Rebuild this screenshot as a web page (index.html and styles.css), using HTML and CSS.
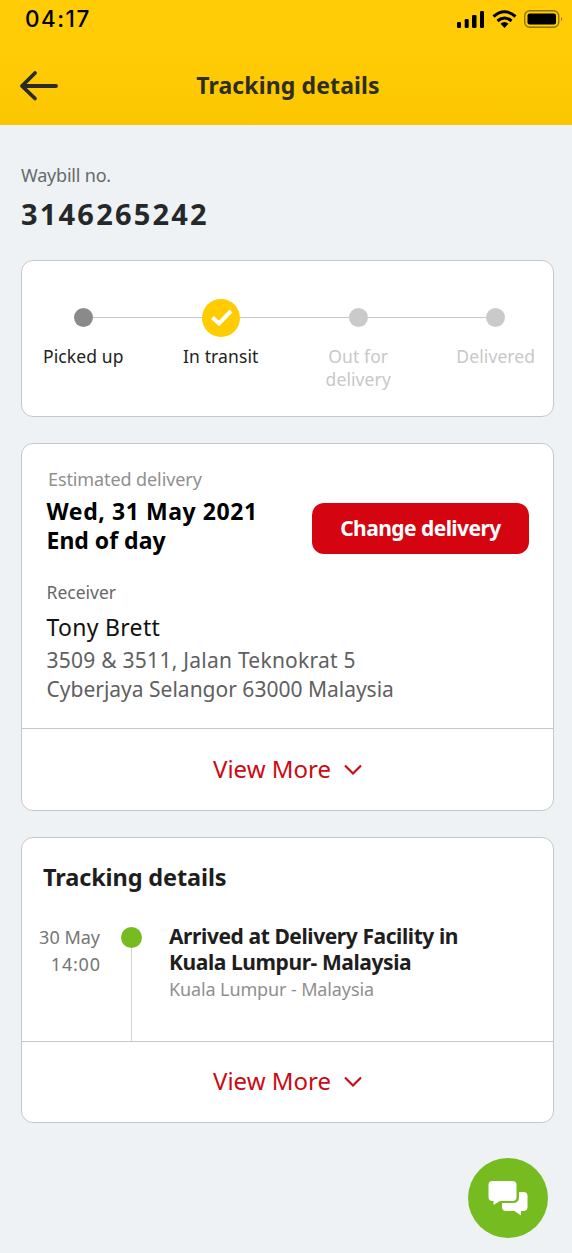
FILE: index.html
```html
<!DOCTYPE html>
<html lang="en">
<head>
<meta charset="utf-8">
<title>Tracking details</title>
<link rel="stylesheet" href="styles.css">
</head>
<body>
<header class="header">
  <div class="status">
    <span class="time">04:17</span>
    <svg class="status-icons" width="108" height="20" viewBox="0 0 108 20">
      <rect x="1" y="13" width="4" height="6" rx="1.2"/>
      <rect x="8.700" y="10" width="4" height="9" rx="1.2"/>
      <rect x="16" y="6" width="4.500" height="13" rx="1.2"/>
      <rect x="24" y="2" width="4" height="17" rx="1.2"/>
      <g fill="none" stroke="#000" stroke-width="3">
        <path d="M37.500 7.500Q48.500-2 59.500 7.500"/>
        <path d="M41.500 12Q48.500 6 55.500 12"/>
      </g>
      <path d="M44.500 14.700Q48.500 11.500 52.500 14.700L48.500 19Z"/>
      <rect x="68.700" y="1.700" width="34" height="16.500" rx="5" fill="none" stroke="#8d7300" stroke-width="1.400"/>
      <rect x="71.500" y="4.500" width="28.500" height="11" rx="2"/>
      <path d="M105 8Q107.500 10 105 12Z" fill="#8d7300"/>
    </svg>
  </div>
  <div class="titlebar">
    <svg class="back" width="40" height="32" viewBox="0 0 40 32" fill="none" stroke="#2a2a26" stroke-width="3.800" stroke-linecap="round" stroke-linejoin="round"><path d="M37 16H3M16 3L3 16L16 28.500"/></svg>
    <h1 class="title">Tracking details</h1>
  </div>
</header>
<main class="main">
  <section class="waybill">
    <div class="waybill-label">Waybill no.</div>
    <div class="waybill-number">3146265242</div>
  </section>
  <section class="card progress">
    <ol class="steps">
      <li class="step done"><div class="marker"><i class="dot"></i></div><span>Picked up</span></li>
      <li class="step current"><div class="marker"><svg width="38" height="38" viewBox="0 0 38 38"><circle cx="19" cy="19" r="19" fill="#fc0"/><path d="M10.500 18.500L17 24.500L29 12" fill="none" stroke="#fff" stroke-width="4"/></svg></div><span>In transit</span></li>
      <li class="step"><div class="marker"><i class="dot"></i></div><span>Out for<br>delivery</span></li>
      <li class="step"><div class="marker"><i class="dot"></i></div><span>Delivered</span></li>
    </ol>
  </section>
  <section class="card delivery">
    <div class="delivery-body">
      <div class="eta-label">Estimated delivery</div>
      <div class="eta-row">
        <div class="eta"><div class="eta-date">Wed, 31 May 2021</div><div class="eta-time">End of day</div></div>
        <button class="change">Change delivery</button>
      </div>
      <div class="receiver-label">Receiver</div>
      <div class="receiver">Tony Brett</div>
      <div class="address"><div class="address-street">3509 &amp; 3511, Jalan Teknokrat 5</div><div>Cyberjaya Selangor 63000 Malaysia</div></div>
    </div>
    <div class="more"><span>View More</span><svg width="18" height="12" viewBox="0 0 18 12" fill="none" stroke="#cc0a14" stroke-width="2.200"><path d="M1 1.500L9 9.500L17 1.500"/></svg></div>
  </section>
  <section class="card history">
    <div class="history-body">
      <h2 class="history-title">Tracking details</h2>
      <div class="event">
        <div class="when"><div>30 May</div><div class="hour">14:00</div></div>
        <div class="rail"><i class="event-dot"></i></div>
        <div class="what"><div>Arrived at Delivery Facility in</div><div>Kuala Lumpur- Malaysia</div><div class="where">Kuala Lumpur - Malaysia</div></div>
      </div>
    </div>
    <div class="more"><span>View More</span><svg width="18" height="12" viewBox="0 0 18 12" fill="none" stroke="#cc0a14" stroke-width="2.200"><path d="M1 1.500L9 9.500L17 1.500"/></svg></div>
  </section>
</main>
<button class="chat" aria-label="Chat">
  <svg width="80" height="80" viewBox="0 0 80 80" fill="#fff"><path d="M24.500 23H44.500Q48.500 23 48.500 27V39Q48.500 43 44.500 43H32L25.500 47V43H24.500Q20.500 43 20.500 39V27Q20.500 23 24.500 23Z"/><path d="M51 34H55.500Q59.500 34 59.500 38V49Q59.500 53 55.500 53H53V57.500L46.500 53H38Q34 53 34 49V45H45Q51 45 51 39Z"/></svg>
</button>
</body>
</html>
```
FILE: styles.css
```css
* { box-sizing: border-box; }
body { margin: 0; width: 572px; height: 1253px; overflow: hidden; background: #eef2f4; font-family: "Noto Sans", sans-serif; color: #1e1e1e; white-space: nowrap; }
h1, h2, ol { margin: 0; padding: 0; }
.header { height: 125px; background: linear-gradient(#ffcc05 40%, #fbc600); }
.status { display: flex; justify-content: space-between; align-items: center; height: 37px; padding: 0 8px 0 25px; }
.time { padding-top: 1px; font: 500 22.5px/36px Inter, sans-serif; letter-spacing: 1.5px; color: #000; }
.status-icons { display: block; }
.titlebar { display: grid; grid-template-columns: 60px 1fr 60px; align-items: center; height: 97px; padding: 0 15px 0 19px; }
.back { display: block; }
.title { padding-bottom: 2px; font-size: 23px; line-height: 30px; letter-spacing: 0.12px; text-align: center; color: #2d2d22; }
.main { display: flex; flex-direction: column; padding: 38px 18px 0 21px; }
.waybill { height: 97px; }
.waybill-label { font-size: 18px; line-height: 24px; letter-spacing: -0.2px; color: #666a6c; }
.waybill-number { margin-top: 9px; font-size: 29px; font-weight: 700; line-height: 36px; letter-spacing: 2.2px; color: #25282a; }
.card { background: #fff; border: 1px solid #c5c8ca; border-radius: 12px; }
.progress { height: 157px; margin-bottom: 26px; padding-top: 38px; }
.steps { display: grid; grid-template-columns: repeat(4, 137.5px); margin: 0 -7.5px; list-style: none; }
.step { text-align: center; font-size: 17.5px; line-height: 22.5px; letter-spacing: 0.1px; color: #c8c8c8; }
.marker { display: flex; justify-content: center; align-items: center; height: 38px; margin-bottom: 8px; }
.marker::before, .marker::after { content: ""; flex: 1; height: 1px; margin-bottom: 1px; background: #c8c8c8; }
.step:first-child .marker::before, .step:last-child .marker::after { background: none; }
.dot { width: 19px; height: 19px; margin-bottom: 2px; border-radius: 50%; background: #cacaca; }
.done, .current { color: #222; }
.done .dot { background: #8a8a8a; }
.delivery { height: 368px; margin-bottom: 26px; }
.delivery-body { height: 284px; padding: 23px 24px 0 24.5px; }
.eta-label { margin-left: 1.5px; font-size: 18px; line-height: 24px; letter-spacing: -0.1px; color: #8f8f8f; }
.eta-row { display: flex; justify-content: space-between; height: 78px; padding-top: 5px; }
.eta { padding-top: 1px; font-size: 23px; font-weight: 700; line-height: 28.5px; color: #000; }
.eta-date { letter-spacing: 0.57px; }
.eta-time { letter-spacing: 0; }
.change { width: 217px; height: 51px; margin-top: 7px; padding: 0 0 2px; border: 0; border-radius: 12px; background: #d40511; color: #fff; font: 700 21px/28px "Noto Sans", sans-serif; letter-spacing: -0.55px; }
.receiver-label { margin-top: 11px; font-size: 17.5px; line-height: 24px; color: #686868; }
.receiver { margin-top: 8px; font-size: 23px; line-height: 30px; letter-spacing: 0.3px; color: #111; }
.address { margin-top: 4px; font-size: 21px; line-height: 29px; color: #606060; }
.address-street { letter-spacing: 0.25px; }
.more { display: flex; justify-content: center; align-items: center; gap: 13px; height: 82px; border-top: 1px solid #c5c8ca; font-size: 24px; color: #cc0a14; }
.more span { padding-bottom: 3px; }
.history { height: 286px; }
.history .more { height: 80px; }
.history-body { display: flex; flex-direction: column; height: 203px; padding: 24px 21px 0 17px; }
.history-title { margin-left: 4px; font-size: 23.5px; line-height: 30px; letter-spacing: -0.12px; }
.event { display: grid; grid-template-columns: 61px 62px 1fr; flex: 1; margin-top: 32px; }
.when { text-align: right; font-size: 18px; line-height: 27px; color: #757575; }
.hour { margin-right: -0.8px; letter-spacing: 0.8px; }
.rail { display: flex; flex-direction: column; align-items: center; padding-top: 3px; }
.rail::after { content: ""; flex: 1; width: 1px; background: #d4d4d4; }
.event-dot { width: 21px; height: 21px; border-radius: 50%; background: #76bc21; }
.what { padding-left: 7px; font-size: 21px; font-weight: 700; line-height: 25.5px; letter-spacing: -0.42px; }
.where { font-size: 18px; font-weight: 400; line-height: 28px; letter-spacing: -0.12px; color: #8f8f8f; }
.chat { position: absolute; left: 468px; top: 1158px; width: 80px; height: 80px; padding: 0; border: 0; border-radius: 50%; background: #76bc21; }
.chat svg { display: block; }
```
